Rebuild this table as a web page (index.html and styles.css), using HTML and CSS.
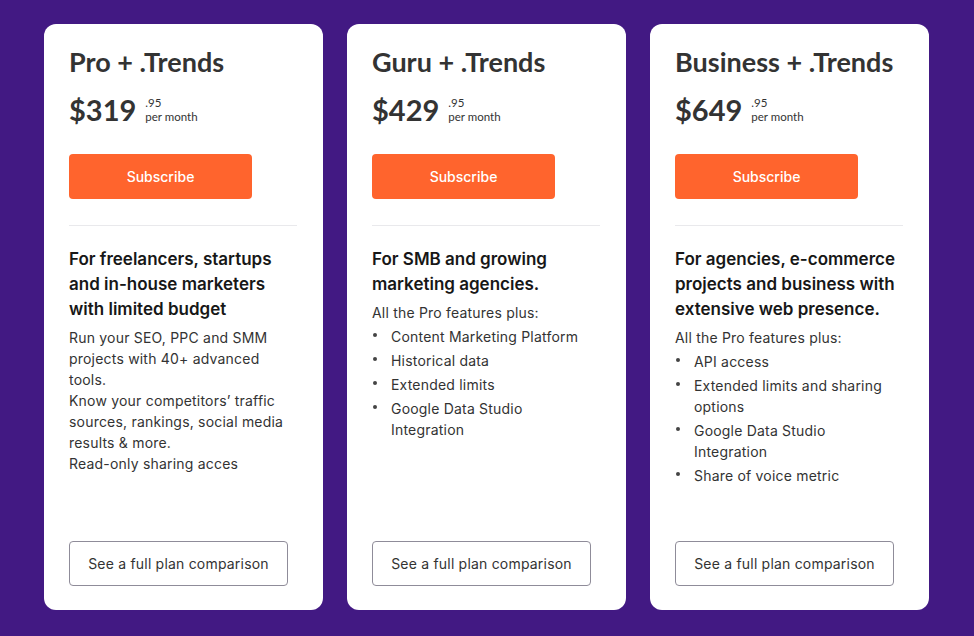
FILE: index.html
```html
<!DOCTYPE html>
<html>
<head>
<meta charset="utf-8">
<link rel="stylesheet" href="styles.css">
</head>
<body>
<main class="plans">
  <section class="card">
    <h2 class="title">Pro + .Trends</h2>
    <div class="price"><span class="amount">$319</span><span class="price-meta"><span class="cents">.95</span><span class="period">per month</span></span></div>
    <button class="subscribe">Subscribe</button>
    <hr class="divider">
    <h3 class="lead">For freelancers, startups and in-house marketers with limited budget</h3>
    <p class="text">Run your SEO, PPC and SMM projects with 40+ advanced tools.<br>Know your competitors’ traffic sources, rankings, social media results &amp; more.<br>Read-only sharing acces</p>
    <button class="compare">See a full plan comparison</button>
  </section>
  <section class="card">
    <h2 class="title">Guru + .Trends</h2>
    <div class="price"><span class="amount">$429</span><span class="price-meta"><span class="cents">.95</span><span class="period">per month</span></span></div>
    <button class="subscribe">Subscribe</button>
    <hr class="divider">
    <h3 class="lead">For SMB and growing marketing agencies.</h3>
    <p class="text">All the Pro features plus:</p>
    <ul class="features">
      <li>Content Marketing Platform</li>
      <li>Historical data</li>
      <li>Extended limits</li>
      <li>Google Data Studio Integration</li>
    </ul>
    <button class="compare">See a full plan comparison</button>
  </section>
  <section class="card">
    <h2 class="title">Business + .Trends</h2>
    <div class="price"><span class="amount">$649</span><span class="price-meta"><span class="cents">.95</span><span class="period">per month</span></span></div>
    <button class="subscribe">Subscribe</button>
    <hr class="divider">
    <h3 class="lead">For agencies, e-commerce projects and business with extensive web presence.</h3>
    <p class="text">All the Pro features plus:</p>
    <ul class="features">
      <li>API access</li>
      <li>Extended limits and sharing options</li>
      <li>Google Data Studio Integration</li>
      <li>Share of voice metric</li>
    </ul>
    <button class="compare">See a full plan comparison</button>
  </section>
</main>
</body>
</html>
```
FILE: styles.css
```css
* { box-sizing: border-box; }
html, body { margin: 0; padding: 0; }
body {
  background: #421983;
  font-family: Inter, "Liberation Sans", sans-serif;
  color: #333;
  width: 974px;
  height: 636px;
  overflow: hidden;
}
.plans {
  display: flex;
  gap: 24px;
  padding: 24px 0 0 44px;
}
.card {
  width: 279px;
  height: 586px;
  background: #fff;
  border-radius: 12px;
  padding: 21px 26px 24px 25px;
  display: flex;
  flex-direction: column;
}
.title {
  margin: 0;
  font-family: Lato, "Open Sans", sans-serif;
  font-weight: 700;
  font-size: 27px;
  line-height: 34px;
  color: #333;
  white-space: nowrap;
}
.price {
  display: flex;
  align-items: flex-start;
  margin-top: 11px;
  height: 40px;
}
.amount {
  font-family: Lato, "Open Sans", sans-serif;
  font-weight: 700;
  font-size: 29px;
  line-height: 40px;
  color: #333;
}
.price-meta {
  display: flex;
  flex-direction: column;
  margin-left: 9px;
  margin-top: 6px;
  font-family: Lato, "Open Sans", sans-serif;
  font-size: 11.5px;
  line-height: 13px;
  color: #333;
}
.period { margin-top: 1px; }
.subscribe {
  margin-top: 24px;
  width: 183px;
  height: 45px;
  border: 0;
  border-radius: 4px;
  background: #ff642d;
  color: #fff;
  font-family: Inter, sans-serif;
  font-size: 14px;
  font-weight: 500;
  padding: 0;
}
.divider {
  margin: 26px 0 0 0;
  border: 0;
  border-top: 1px solid #e9e9ec;
  height: 0;
}
.lead {
  margin: 21px 0 0 0;
  font-size: 17px;
  line-height: 25px;
  font-weight: 600;
  color: #171717;
}
.text {
  margin: 5px 0 0 0;
  font-size: 14px;
  line-height: 21px;
  letter-spacing: 0.2px;
  color: #333;
}
.features {
  list-style: none;
  margin: 3px 0 0 0;
  padding: 0 10px 0 0;
  font-size: 14px;
  line-height: 21px;
  letter-spacing: 0.2px;
  color: #333;
}
.features li {
  position: relative;
  padding-left: 19px;
  margin-bottom: 3px;
}
.features li::before {
  content: "";
  position: absolute;
  left: 1px;
  top: 7px;
  width: 4px;
  height: 4px;
  border-radius: 50%;
  background: #444;
}
.compare {
  margin-top: auto;
  width: 219px;
  height: 45px;
  background: #fff;
  border: 1px solid #8f8c99;
  border-radius: 4px;
  font-family: Inter, sans-serif;
  font-size: 14px;
  letter-spacing: 0.2px;
  color: #333;
  padding: 0;
}
```
